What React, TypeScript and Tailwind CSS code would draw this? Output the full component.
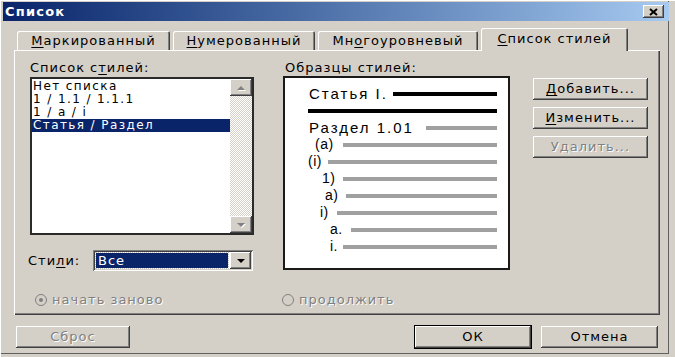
import type { ReactNode } from 'react'

const raised =
  'bg-[#d4d0c8] shadow-[inset_-1px_-1px_#404040,inset_1px_1px_#ffffff,inset_-2px_-2px_#808080,inset_2px_2px_#d4d0c8]'

function U({ children }: { children: ReactNode }) {
  return <span className="underline underline-offset-[2px] decoration-1">{children}</span>
}

function Arrow({ up, disabled }: { up?: boolean; disabled?: boolean }) {
  const pts = up ? '1,5 5,1 9,5' : '1,1 5,5 9,1'
  return (
    <svg width="10" height="6" viewBox="0 0 10 6">
      {disabled && <polygon points={pts} fill="#ffffff" transform="translate(1,1)" />}
      <polygon points={pts} fill={disabled ? '#808080' : '#000000'} />
    </svg>
  )
}

function Button({ children, w, disabled, primary }: { children: ReactNode; w: string; disabled?: boolean; primary?: boolean }) {
  return (
    <div
      className={`${w} h-[22px] flex items-center justify-center ${raised} ${primary ? 'outline outline-1 outline-black' : ''} ${
        disabled ? 'text-[#808080] [text-shadow:1px_1px_#ffffff]' : 'text-black'
      }`}
    >
      {children}
    </div>
  )
}

const tabs: { label: ReactNode; w: string }[] = [
  { label: <><U>М</U>аркированный</>, w: 'w-[153px]' },
  { label: <><U>Н</U>умерованный</>, w: 'w-[142px]' },
  { label: <>Мн<U>о</U>гоуровневый</>, w: 'w-[160px]' },
]

const items = ['Нет списка', '1 / 1.1 / 1.1.1', '1 / a / i', 'Статья / Раздел']

// left padding inside the preview box, label width up to where the line starts
const sample: { pl: string; w: string; t: string }[] = [
  { pl: 'pl-[30px]', w: 'w-[28px]', t: '(a)' },
  { pl: 'pl-[23px]', w: 'w-[20px]', t: '(i)' },
  { pl: 'pl-[37px]', w: 'w-[21px]', t: '1)' },
  { pl: 'pl-[40px]', w: 'w-[21px]', t: 'a)' },
  { pl: 'pl-[35px]', w: 'w-[17px]', t: 'i)' },
  { pl: 'pl-[45px]', w: 'w-[21px]', t: 'a.' },
  { pl: 'pl-[45px]', w: 'w-[13px]', t: 'i.' },
]

export default function App() {
  return (
    <div className="w-[675px] h-[357px] bg-[#d4d0c8] pl-[3px] pr-[6px] pt-[2px] flex flex-col overflow-hidden font-['DejaVu_Sans',sans-serif] text-[13px] tracking-[1px] text-black shadow-[inset_1px_1px_#ffffff,inset_-6px_-3px_#d4d0c8,inset_-7px_-4px_#606060]">
      {/* title bar */}
      <div className="h-[19px] flex items-center justify-between pl-[2px] pr-[5px] bg-gradient-to-r from-[#0a246a] to-[#a6caf0]">
        <span className="text-white font-bold text-[13px] tracking-[1.2px]">Список</span>
        <div className={`w-[21px] h-[13px] flex items-center justify-center ${raised}`}>
          <svg width="9" height="8" viewBox="0 0 9 8">
            <path d="M1 1 L8 7 M8 1 L1 7" stroke="#000" strokeWidth="2" />
          </svg>
        </div>
      </div>

      <div className="flex flex-col px-[11px]">
        {/* tabs */}
        <div className="mt-[7px] h-[22px] flex items-end gap-[3px] pl-[3px]">
          {tabs.map((t, i) => (
            <div
              key={i}
              className={`${t.w} h-[19px] flex items-center justify-center rounded-t-[2px] shadow-[inset_1px_1px_#ffffff,inset_-1px_0_#404040,inset_-2px_0_#808080]`}
            >
              {t.label}
            </div>
          ))}
          <div className="relative z-10 w-[147px] h-[23px] mb-[-1px] pb-[2px] flex items-center justify-center rounded-t-[2px] bg-[#d4d0c8] shadow-[inset_1px_1px_#ffffff,inset_-1px_0_#404040,inset_-2px_0_#808080]">
            <U>С</U>писок стилей
          </div>
        </div>

        {/* panel */}
        <div className="w-[646px] h-[265px] pt-[10px] pl-[16px] flex flex-col shadow-[inset_1px_1px_#ffffff,inset_-1px_-1px_#404040,inset_-2px_-2px_#808080]">
          <div className="flex items-start">
            {/* styles list */}
            <div className="w-[224px] flex flex-col">
              <div className="h-[15px] leading-[15px]">
                Список с<U>т</U>илей:
              </div>
              <div className="mt-[2px] h-[158px] border-2 border-[#2a2a2a] bg-white flex">
                <div className="flex-1 flex flex-col pt-[1px]">
                  {items.map((it, i) => (
                    <div
                      key={i}
                      className={`h-[13px] leading-[13px] text-[12px] tracking-[1.4px] pl-[1px] whitespace-nowrap overflow-hidden ${i === 3 ? 'bg-[#0a246a] text-white' : ''}`}
                    >
                      {it}
                    </div>
                  ))}
                </div>
                <div className="w-[22px] flex flex-col bg-[repeating-conic-gradient(#ffffff_0_25%,#d4d0c8_0_50%)] bg-[length:2px_2px]">
                  <div className={`h-[17px] flex items-center justify-center ${raised}`}>
                    <Arrow up disabled />
                  </div>
                  <div className="flex-1" />
                  <div className={`h-[17px] flex items-center justify-center ${raised}`}>
                    <Arrow disabled />
                  </div>
                </div>
              </div>
              <div className="mt-[15px] h-[21px] flex items-center -ml-[2px]">
                <span className="w-[65px]">
                  Сти<U>л</U>и:
                </span>
                <div className="w-[160px] h-[21px] p-[2px] flex bg-white shadow-[inset_1px_1px_#808080,inset_-1px_-1px_#ffffff,inset_2px_2px_#404040,inset_-2px_-2px_#d4d0c8]">
                  <div className="flex-1 m-[1px] mr-[2px] pl-[2px] flex items-center bg-[#0a246a] text-white outline outline-1 outline-dotted outline-[#c0c0c0] leading-[13px]">
                    Все
                  </div>
                  <div className={`w-[21px] flex items-center justify-center ${raised}`}>
                    <Arrow />
                  </div>
                </div>
              </div>
            </div>

            {/* preview */}
            <div className="ml-[29px] w-[227px] flex flex-col">
              <div className="h-[15px] leading-[15px] pl-[2px]">Образцы стилей:</div>
              <div className="mt-[1px] h-[194px] border-2 border-[#1a1a1a] bg-white pt-[7px] pr-[11px] flex flex-col font-['Liberation_Sans',sans-serif] tracking-[1.5px]">
                <div className="h-[17px] flex items-center pl-[24px]">
                  <span className="w-[84px] text-[15px] leading-[17px] tracking-[2px] whitespace-nowrap">Статья I.</span>
                  <div className="flex-1 h-[4px] bg-black" />
                </div>
                <div className="h-[17px] flex items-center pl-[23px]">
                  <div className="flex-1 h-[4px] bg-black" />
                </div>
                <div className="h-[17px] flex items-center pl-[24px]">
                  <span className="w-[117px] text-[15px] leading-[17px] tracking-[2px] whitespace-nowrap">Раздел 1.01</span>
                  <div className="flex-1 h-[4px] bg-[#a0a0a0]" />
                </div>
                {sample.map((s, i) => (
                  <div key={i} className={`h-[17px] flex items-center ${s.pl}`}>
                    <span className={`${s.w} text-[14px] leading-[17px] whitespace-nowrap tracking-[0.5px]`}>{s.t}</span>
                    <div className="flex-1 h-[4px] bg-[#a0a0a0]" />
                  </div>
                ))}
              </div>
            </div>

            {/* buttons */}
            <div className="ml-[23px] mt-[18px] flex flex-col gap-[7px]">
              <Button w="w-[115px]">
                <U>Д</U>обавить...
              </Button>
              <Button w="w-[115px]">
                <U>И</U>зменить...
              </Button>
              <Button w="w-[115px]" disabled>
                Удалить...
              </Button>
            </div>
          </div>

          {/* radios */}
          <div className="mt-[21px] h-[16px] flex items-center pl-[5px] text-[#808080] [text-shadow:1px_1px_#ffffff]">
            <div className="w-[247px] flex items-center gap-[5px]">
              <svg width="12" height="12" viewBox="0 0 12 12">
                <circle cx="6" cy="6" r="5.5" fill="#d4d0c8" stroke="#808080" />
                <circle cx="6" cy="6" r="2" fill="#808080" />
              </svg>
              <span>начать заново</span>
            </div>
            <div className="flex items-center gap-[5px]">
              <svg width="12" height="12" viewBox="0 0 12 12">
                <circle cx="6" cy="6" r="5.5" fill="#d4d0c8" stroke="#808080" />
              </svg>
              <span>продолжить</span>
            </div>
          </div>
        </div>

        {/* bottom buttons */}
        <div className="mt-[11px] flex items-center pl-[2px]">
          <Button w="w-[116px]" disabled>
            Сброс
          </Button>
          <div className="ml-[285px]">
            <Button w="w-[116px]" primary>
              ОК
            </Button>
          </div>
          <div className="ml-[10px]">
            <Button w="w-[117px]">Отмена</Button>
          </div>
        </div>
      </div>
    </div>
  )
}
